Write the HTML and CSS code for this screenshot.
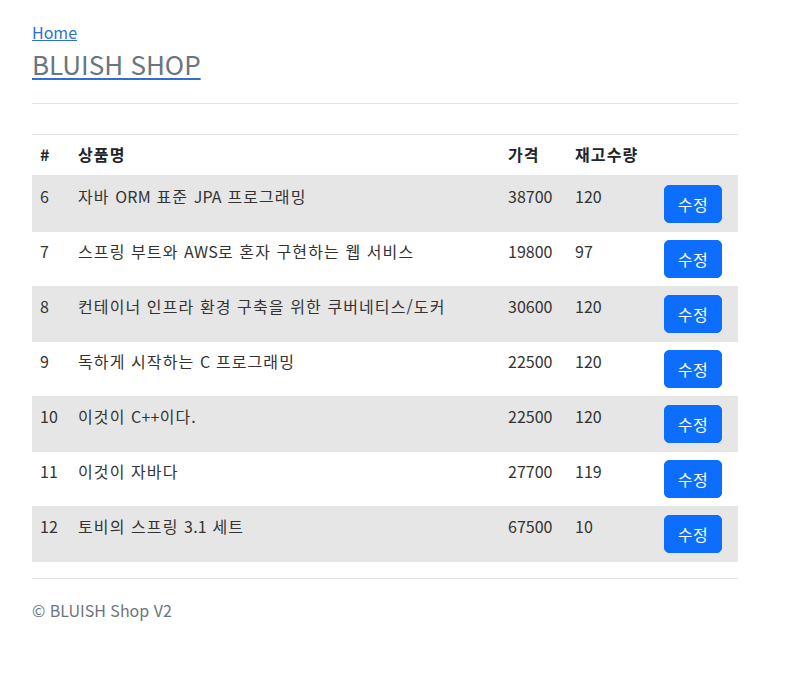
FILE: index.html
```html
<!DOCTYPE html>
<html lang="ko">
<head>
<meta charset="utf-8">
<title>BLUISH SHOP</title>
<link rel="stylesheet" href="styles.css">
</head>
<body>
<div class="container">
  <header class="page-header">
    <a class="home-link" href="#">Home</a>
    <h1 class="title"><a class="title-link" href="#">BLUISH SHOP</a></h1>
  </header>
  <hr class="divider">
  <table class="product-table">
    <colgroup>
      <col class="c-num"><col class="c-name"><col class="c-price"><col class="c-stock"><col class="c-action">
    </colgroup>
    <thead>
      <tr><th>#</th><th class="ko">상품명</th><th class="ko">가격</th><th class="ko">재고수량</th><th></th></tr>
    </thead>
    <tbody>
      <tr class="striped"><td>6</td><td class="ko">자바 <span class="en">ORM</span> 표준 <span class="en">JPA</span> 프로그래밍</td><td>38700</td><td>120</td><td><button class="btn">수정</button></td></tr>
      <tr><td>7</td><td class="ko">스프링 부트와 <span class="en">AWS</span>로 혼자 구현하는 웹 서비스</td><td>19800</td><td>97</td><td><button class="btn">수정</button></td></tr>
      <tr class="striped"><td>8</td><td class="ko">컨테이너 인프라 환경 구축을 위한 쿠버네티스/도커</td><td>30600</td><td>120</td><td><button class="btn">수정</button></td></tr>
      <tr><td>9</td><td class="ko">독하게 시작하는 <span class="en">C</span> 프로그래밍</td><td>22500</td><td>120</td><td><button class="btn">수정</button></td></tr>
      <tr class="striped"><td>10</td><td class="ko">이것이 <span class="en">C++</span>이다.</td><td>22500</td><td>120</td><td><button class="btn">수정</button></td></tr>
      <tr><td>11</td><td class="ko">이것이 자바다</td><td>27700</td><td>119</td><td><button class="btn">수정</button></td></tr>
      <tr class="striped"><td>12</td><td class="ko">토비의 스프링 <span class="en">3.1</span> 세트</td><td>67500</td><td>10</td><td><button class="btn">수정</button></td></tr>
    </tbody>
  </table>
  <hr class="divider footer-divider">
  <footer class="footer">© BLUISH Shop V2</footer>
</div>
</body>
</html>
```

FILE: styles.css
```css
html, body {
  margin: 0;
  padding: 0;
}
body {
  font-family: "Noto Sans CJK KR", "Noto Sans", sans-serif;
  font-size: 16px;
  line-height: 24px;
  color: #212529;
  background: #fff;
}
.container {
  width: 706px;
  padding: 20px 32px 0 32px;
}
.page-header {
  display: flex;
  flex-direction: column;
}
.home-link {
  color: #2f6fd0;
  text-decoration: underline;
  font-size: 16px;
  line-height: 24px;
  align-self: flex-start;
}
.title {
  margin: 2px 0 0 0;
  font-size: 26px;
  line-height: 36px;
  font-weight: 400;
}
.title-link {
  color: #6c757d;
  text-decoration: underline;
  text-decoration-color: #2f6fd0;
  text-decoration-thickness: 2px;
  text-underline-offset: 3px;
}
.divider {
  border: 0;
  border-top: 1px solid #e3e3e3;
  margin: 21px 0 30px 0;
}
.product-table {
  width: 706px;
  border-collapse: collapse;
  table-layout: fixed;
  border-top: 1px solid #e3e3e3;
}
.c-num { width: 38px; }
.c-name { width: 430px; }
.c-price { width: 67px; }
.c-stock { width: 89px; }
.c-action { width: 82px; }
.product-table th,
.product-table td {
  padding: 7px 8px 9px 8px;
  text-align: left;
  vertical-align: top;
  line-height: 24px;
  white-space: nowrap;
}
.product-table td:last-child {
  padding: 8px;
}
.product-table .ko {
  letter-spacing: 1.1px;
}
.product-table .en {
  letter-spacing: 0.2px;
}
.product-table th {
  font-weight: 700;
  border-bottom: 2px solid #e6e6e6;
  color: #212529;
}
.product-table td {
  border-bottom: 1px solid #e6e6e6;
  color: #333;
}
.product-table tr.striped td {
  background: #e6e6e6;
}
.btn {
  font-family: inherit;
  font-size: 16px;
  line-height: 24px;
  padding: 6px 12px;
  margin: 0;
  border: 1px solid #0d6efd;
  border-radius: 5px;
  background: #0d6efd;
  color: #fff;
  width: 58px;
  height: 38px;
  letter-spacing: 0.5px;
}
.footer-divider {
  margin: 16px 0 19px 0;
}
.footer {
  color: #6c757d;
  font-size: 16px;
  line-height: 24px;
}
```
